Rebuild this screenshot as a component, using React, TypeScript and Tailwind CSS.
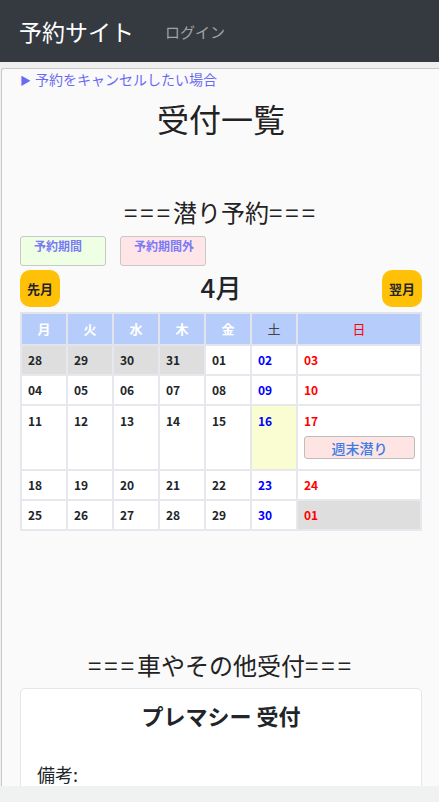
import React from "react";

type Cell = { d: string; kind: "prev" | "wd" | "sat" | "sun"; out?: boolean; hl?: boolean; btn?: boolean };

const rows: Cell[][] = [
  [
    { d: "28", kind: "wd", out: true },
    { d: "29", kind: "wd", out: true },
    { d: "30", kind: "wd", out: true },
    { d: "31", kind: "wd", out: true },
    { d: "01", kind: "wd" },
    { d: "02", kind: "sat" },
    { d: "03", kind: "sun" },
  ],
  [
    { d: "04", kind: "wd" },
    { d: "05", kind: "wd" },
    { d: "06", kind: "wd" },
    { d: "07", kind: "wd" },
    { d: "08", kind: "wd" },
    { d: "09", kind: "sat" },
    { d: "10", kind: "sun" },
  ],
  [
    { d: "11", kind: "wd" },
    { d: "12", kind: "wd" },
    { d: "13", kind: "wd" },
    { d: "14", kind: "wd" },
    { d: "15", kind: "wd" },
    { d: "16", kind: "sat", hl: true },
    { d: "17", kind: "sun", btn: true },
  ],
  [
    { d: "18", kind: "wd" },
    { d: "19", kind: "wd" },
    { d: "20", kind: "wd" },
    { d: "21", kind: "wd" },
    { d: "22", kind: "wd" },
    { d: "23", kind: "sat" },
    { d: "24", kind: "sun" },
  ],
  [
    { d: "25", kind: "wd" },
    { d: "26", kind: "wd" },
    { d: "27", kind: "wd" },
    { d: "28", kind: "wd" },
    { d: "29", kind: "wd" },
    { d: "30", kind: "sat" },
    { d: "01", kind: "sun", out: true },
  ],
];

const Eq = () => <span className="tracking-[3px]">===</span>;

export default function App() {
  return (
    <div
      className="relative h-[802px] w-[439px] overflow-hidden bg-[#efefef]"
      style={{ fontFamily: '"Noto Sans CJK JP", "Noto Sans", sans-serif' }}
    >
      <header className="flex h-[62px] items-center bg-[#343a40] pl-[19px]">
        <span className="text-[23px] leading-none text-white">予約サイト</span>
        <span className="ml-[31px] text-[15px] leading-none text-[#a0a3a6]">ログイン</span>
      </header>
      <div className="pl-[1px] pt-[6px]">
        <div className="w-[470px] rounded-tl-[3px] border-l border-t border-[#c9c9c9] bg-[#fafafa] pb-[40px]">
          <div className="w-[402px] pl-[18px] box-content">
            <div className="text-[14px] leading-[20px] text-[#6a6af4]">
              <span className="mr-[4px] text-[11px]">▶</span>予約をキャンセルしたい場合
            </div>
            <h1 className="mt-[8px] text-center text-[32px] leading-[40px] text-[#222]">受付一覧</h1>
            <h2 className="mt-[58px] text-center text-[24px] leading-[32px] text-[#222]">
              <Eq />潜り予約<Eq />
            </h2>
            <div className="mt-[8px] flex gap-[14px]">
              <div className="h-[30px] w-[86px] rounded-[3px] border border-[#c8c8c8] bg-[#efffe4] pl-[13px] pt-[1px] text-[12px] font-bold leading-[16px] text-[#7a7af6]">
                予約期間
              </div>
              <div className="h-[30px] w-[86px] rounded-[3px] border border-[#c8c8c8] bg-[#ffe5e7] pl-[13px] pt-[1px] text-[12px] font-bold leading-[16px] text-[#7a7af6]">
                予約期間外
              </div>
            </div>
            <div className="mt-[4px] flex items-center justify-between">
              <button className="flex h-[37px] w-[40px] items-center justify-center rounded-[10px] bg-[#ffc107] text-[13px] font-bold text-[#212529]">
                先月
              </button>
              <div className="-mt-[3px] text-[26px] font-medium leading-none text-[#212529]">4月</div>
              <button className="flex h-[37px] w-[40px] items-center justify-center rounded-[10px] bg-[#ffc107] text-[13px] font-bold text-[#212529]">
                翌月
              </button>
            </div>
            <table className="mt-[5px] w-[402px] table-fixed border-collapse text-[12px]">
              <colgroup>
                <col className="w-[46px]" />
                <col className="w-[46px]" />
                <col className="w-[46px]" />
                <col className="w-[46px]" />
                <col className="w-[46px]" />
                <col className="w-[46px]" />
                <col />
              </colgroup>
              <thead>
                <tr className="h-[32px] bg-[#b6cdfc]">
                  {["月", "火", "水", "木", "金"].map((w) => (
                    <th key={w} className="border-2 border-[#e1e4eb] text-[13px] font-bold text-white">
                      {w}
                    </th>
                  ))}
                  <th className="border-2 border-[#e1e4eb] text-[13px] font-normal text-[#444]">土</th>
                  <th className="border-2 border-[#e1e4eb] text-[13px] font-normal text-[#ff0000]">日</th>
                </tr>
              </thead>
              <tbody>
                {rows.map((r, i) => (
                  <tr key={i} className={i === 2 ? "h-[65px]" : "h-[30px]"}>
                    {r.map((c, j) => {
                      const bg = c.out ? "bg-[#dedede]" : c.hl ? "bg-[#fafdd2]" : "bg-white";
                      const col =
                        c.kind === "sat" ? "text-[#0000ff]" : c.kind === "sun" ? "text-[#ff0000]" : "text-[#212529]";
                      return (
                        <td
                          key={j}
                          className={`border-2 border-[#e6e8ee] ${bg} ${i === 2 ? "align-top pt-[8px]" : "align-middle"} pl-[6px] font-bold leading-[14px] ${col}`}
                        >
                          <div>{c.d}</div>
                          {c.btn && (
                            <div className="mt-[8px] mr-[5px] flex h-[23px] items-center justify-center rounded-[3px] border border-[#bdbdbd] bg-[#ffe4e4] text-[14px] font-medium text-[#3b7de6]">
                              週末潜り
                            </div>
                          )}
                        </td>
                      );
                    })}
                  </tr>
                ))}
              </tbody>
            </table>
            <h2 className="mt-[118px] text-center text-[24px] leading-[32px] text-[#222]">
              <Eq />車やその他受付<Eq />
            </h2>
            <div className="mt-[7px] h-[200px] rounded-[5px] border border-[#e6e6e6] bg-white">
              <div className="pt-[11px] text-center text-[22px] font-bold leading-[30px] text-[#212529]">
                プレマシー 受付
              </div>
              <div className="mt-[32px] pl-[16px] text-[18px] leading-[24px] text-[#212529]">備考:</div>
            </div>
          </div>
        </div>
      </div>
      <div className="absolute bottom-0 left-0 h-[16px] w-full bg-[#f0f1f1]" />
    </div>
  );
}
